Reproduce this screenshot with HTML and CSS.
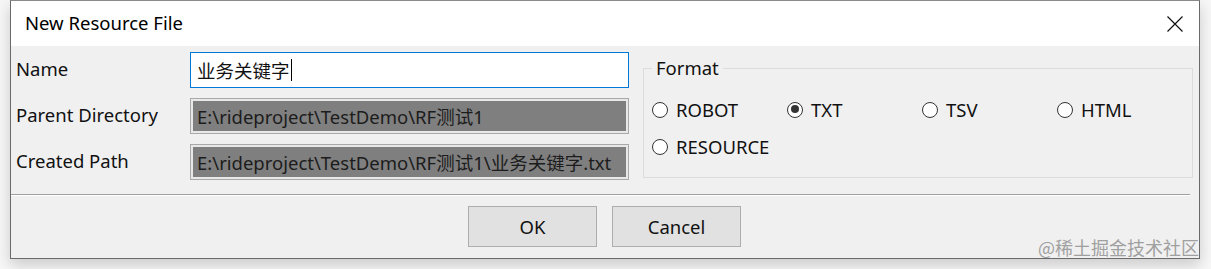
FILE: index.html
```html
<!DOCTYPE html>
<html>
<head>
<meta charset="utf-8">
<link rel="stylesheet" href="styles.css">
</head>
<body>
<div class="window">
  <div class="titlebar">
    <span class="title">New Resource File</span>
    <svg class="close" width="16" height="16" viewBox="0 0 16 16"><path d="M0.5 0.5 L15.5 15.5 M15.5 0.5 L0.5 15.5" stroke="#111" stroke-width="1.2" fill="none"/></svg>
  </div>
  <div class="content">
    <div class="top">
      <div class="form">
        <label class="lbl">Name</label>
        <div class="field active"><span>业务关键字</span><span class="caret"></span></div>
        <label class="lbl">Parent Directory</label>
        <div class="field disabled"><span>E:\rideproject\TestDemo\RF测试1</span></div>
        <label class="lbl">Created Path</label>
        <div class="field disabled"><span>E:\rideproject\TestDemo\RF测试1\业务关键字.txt</span></div>
      </div>
      <fieldset class="group">
        <legend>Format</legend>
        <div class="radios">
          <div class="radio"><span class="dot"></span>ROBOT</div>
          <div class="radio"><span class="dot checked"></span>TXT</div>
          <div class="radio"><span class="dot"></span>TSV</div>
          <div class="radio"><span class="dot"></span>HTML</div>
          <div class="radio"><span class="dot"></span>RESOURCE</div>
        </div>
      </fieldset>
    </div>
    <div class="sep"></div>
    <div class="buttons">
      <button class="btn">OK</button>
      <button class="btn">Cancel</button>
    </div>
  </div>
  <div class="watermark">@稀土掘金技术社区</div>
</div>
</body>
</html>
```
FILE: styles.css
```css
html, body {
  margin: 0;
  padding: 0;
  background: #f7f7f7;
  font-family: "Noto Sans", "Open Sans", "Noto Sans CJK SC", sans-serif;
  color: #111;
}
body {
  padding-left: 10px;
  height: 269px;
  overflow: hidden;
}
.window {
  position: relative;
  width: 1188px;
  height: 257px;
  border: 1px solid #6a6a6a;
  border-top-color: #8a8a8a;
  background: #f0f0f0;
  box-shadow: 0 6px 14px rgba(0,0,0,0.18);
  display: flex;
  flex-direction: column;
}
.titlebar {
  height: 45px;
  flex: none;
  background: #ffffff;
  display: flex;
  align-items: center;
  justify-content: space-between;
  padding: 0 16px 0 14px;
}
.title {
  font-size: 18.5px;
  color: #000;
  margin-top: -2px;
}
.content {
  flex: 1;
  display: flex;
  flex-direction: column;
}
.top {
  display: flex;
  padding: 6px 0 0 0;
  height: 127px;
  flex: none;
}
.form {
  display: grid;
  grid-template-columns: 179px 439px;
  grid-auto-rows: 36px;
  row-gap: 10px;
  align-items: center;
}
.lbl {
  padding-left: 5px;
  font-size: 18.5px;
  color: #111;
  margin-top: -3px;
}
.field {
  height: 36px;
  box-sizing: border-box;
  display: flex;
  align-items: center;
  font-size: 18.5px;
  white-space: nowrap;
  overflow: hidden;
}
.field.active {
  background: #fff;
  border: 1px solid #0078d7;
  padding-left: 6px;
  font-family: "Noto Sans CJK SC", sans-serif;
}
.caret {
  display: inline-block;
  width: 1px;
  height: 22px;
  background: #000;
  margin-left: 1px;
}
.field.disabled {
  background: #7f7f7f;
  border: 1px solid #a9a9a9;
  box-shadow: inset 0 0 0 2px #e8e8e8;
  padding-left: 6px;
  color: #1c1c1c;
}
.group {
  margin: 7px 0 0 14px;
  padding: 0;
  width: 545px;
  height: 119px;
  box-sizing: border-box;
  border: 1px solid #dcdcdc;
}
.group legend {
  font-size: 18.5px;
  margin-left: 8px;
  padding: 0 4px 0 4px;
  line-height: 18px;
}
.radios {
  display: grid;
  grid-template-columns: repeat(4, 135px);
  grid-auto-rows: 37px;
  padding: 14px 0 0 8px;
}
.radio {
  display: flex;
  align-items: center;
  font-size: 18.5px;
  gap: 8px;
}
.dot {
  width: 16px;
  height: 16px;
  border: 1.3px solid #333;
  border-radius: 50%;
  background: #fff;
  box-sizing: border-box;
  position: relative;
  flex: none;
}
.dot.checked::after {
  content: "";
  position: absolute;
  left: 2.7px;
  top: 2.7px;
  width: 8px;
  height: 8px;
  border-radius: 50%;
  background: #333;
}
.sep {
  margin: 15px 9px 0 0;
  height: 1px;
  background: #a0a0a0;
  border-bottom: 1px solid #fff;
}
.buttons {
  display: flex;
  justify-content: center;
  gap: 15px;
  padding-top: 10px;
  padding-right: 1px;
}
.btn {
  width: 129px;
  height: 41px;
  background: #e1e1e1;
  border: 1px solid #adadad;
  font-family: "Noto Sans", sans-serif;
  font-size: 18.5px;
  color: #111;
}
.watermark {
  position: absolute;
  right: 0;
  bottom: 0;
  font-family: "Noto Sans CJK SC", sans-serif;
  font-size: 18px;
  color: #a0a0a0;
  line-height: 22px;
}
```
